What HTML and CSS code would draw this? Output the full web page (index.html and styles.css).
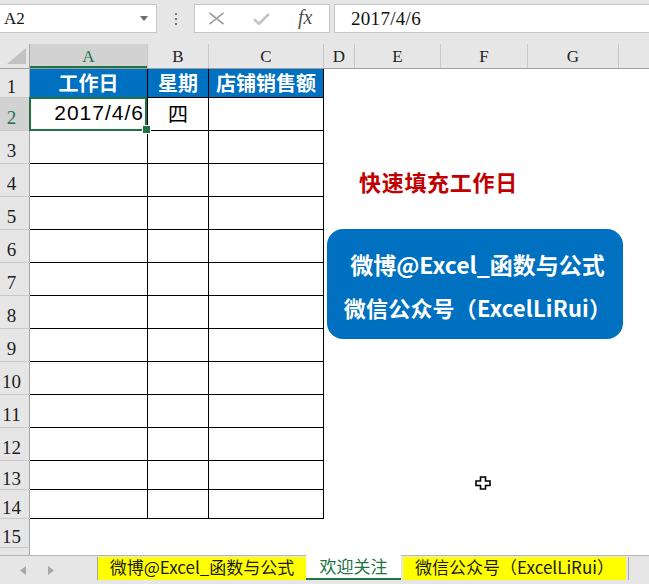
FILE: index.html
```html
<!DOCTYPE html>
<html>
<head>
<meta charset="utf-8">
<title>Excel</title>
<link rel="stylesheet" href="styles.css">
</head>
<body>
<div class="app">
  <div class="fbar">
    <div class="namebox">
      <span>A2</span>
      <svg class="nb-arrow" width="8" height="5" viewBox="0 0 8 5"><path d="M0 0H8L4 5Z" fill="#6a6a6a"/></svg>
    </div>
    <div class="dots"><i></i><i></i><i></i></div>
    <div class="iconbox">
      <svg class="ic" width="17" height="13" viewBox="0 0 17 13"><path d="M1.5 0.8L15.5 12.2M15.5 0.8L1.5 12.2" stroke="#9c9c9c" stroke-width="1.6" fill="none"/></svg>
      <svg class="ic" width="17" height="12" viewBox="0 0 17 12"><path d="M1 6.2L6 10.8L16 1" stroke="#c4c4c4" stroke-width="2.6" fill="none"/></svg>
      <span class="fx">fx</span>
    </div>
    <div class="formula">2017/4/6</div>
  </div>

  <div class="sheet">
    <div class="colhead">
      <div class="corner"><svg width="29" height="24" viewBox="0 0 29 24"><path d="M7 20H26V4Z" fill="#c2c2c2"/></svg></div>
      <div class="hA sel-h">A</div>
      <div class="hB">B</div>
      <div class="hC">C</div>
      <div class="hD">D</div>
      <div class="hE">E</div>
      <div class="hF">F</div>
      <div class="hG">G</div>
      <div class="hH"></div>
    </div>

    <div class="row r1 short">
      <div class="rh">1</div>
      <div class="c ca hd">工作日</div>
      <div class="c cb hd">星期</div>
      <div class="c cc hd">店铺销售额</div>
    </div>
    <div class="row">
      <div class="rh sel-r">2</div>
      <div class="c ca date sel">2017/4/6</div>
      <div class="c cb wk">四</div>
      <div class="c cc"></div>
    </div>
    <div class="row"><div class="rh">3</div><div class="c ca"></div><div class="c cb"></div><div class="c cc"></div></div>
    <div class="row"><div class="rh">4</div><div class="c ca"></div><div class="c cb"></div><div class="c cc"></div></div>
    <div class="row"><div class="rh">5</div><div class="c ca"></div><div class="c cb"></div><div class="c cc"></div></div>
    <div class="row"><div class="rh">6</div><div class="c ca"></div><div class="c cb"></div><div class="c cc"></div></div>
    <div class="row"><div class="rh">7</div><div class="c ca"></div><div class="c cb"></div><div class="c cc"></div></div>
    <div class="row"><div class="rh">8</div><div class="c ca"></div><div class="c cb"></div><div class="c cc"></div></div>
    <div class="row"><div class="rh">9</div><div class="c ca"></div><div class="c cb"></div><div class="c cc"></div></div>
    <div class="row"><div class="rh">10</div><div class="c ca"></div><div class="c cb"></div><div class="c cc"></div></div>
    <div class="row"><div class="rh">11</div><div class="c ca"></div><div class="c cb"></div><div class="c cc"></div></div>
    <div class="row"><div class="rh">12</div><div class="c ca"></div><div class="c cb"></div><div class="c cc"></div></div>
    <div class="row short"><div class="rh">13</div><div class="c ca"></div><div class="c cb"></div><div class="c cc"></div></div>
    <div class="row short"><div class="rh">14</div><div class="c ca"></div><div class="c cb"></div><div class="c cc"></div></div>
    <div class="row short"><div class="rh">15</div></div>
    <div class="row tail"><div class="rh"></div></div>

    <div class="title">快速填充工作日</div>
    <div class="card">
      <div class="l1">微博@Excel_函数与公式</div>
      <div class="l2">微信公众号（ExcelLiRui）</div>
    </div>
    <svg class="cursor" width="16" height="14" viewBox="0 0 16 14"><path d="M5.5 1H10.5V5H15V9.5H10.5V13H5.5V9.5H1V5H5.5Z" fill="#fff" stroke="#000" stroke-width="1.6"/></svg>
  </div>

  <div class="tabs">
    <div class="nav">
      <svg width="6" height="9" viewBox="0 0 6 9"><path d="M6 0V9L0 4.5Z" fill="#a8a8a8"/></svg>
      <svg width="6" height="9" viewBox="0 0 6 9"><path d="M0 0V9L6 4.5Z" fill="#a8a8a8"/></svg>
    </div>
    <div class="tab t1">微博@Excel_函数与公式</div>
    <div class="tab t2">欢迎关注</div>
    <div class="tab t3">微信公众号（ExcelLiRui）</div>
    <div class="tsep"></div>
  </div>
</div>
</body>
</html>
```
FILE: styles.css
```css
* { box-sizing: border-box; }
html, body { margin: 0; padding: 0; }
body {
  width: 649px;
  height: 584px;
  overflow: hidden;
  background: #fff;
  font-family: "Liberation Serif", serif;
  color: #222;
}
.app { width: 649px; height: 584px; overflow: hidden; }

/* formula bar */
.fbar {
  height: 44px;
  background: #e6e6e6;
  display: flex;
  align-items: flex-start;
  padding-top: 4px;
}
.namebox {
  width: 157px;
  height: 29px;
  background: #fff;
  border: 1px solid #c6c6c6;
  border-left: none;
  display: flex;
  align-items: center;
  justify-content: space-between;
  padding: 0 8px 0 4px;
  font-family: "Liberation Serif", serif;
  font-size: 17px;
  color: #111;
}
.dots {
  width: 37px;
  display: flex;
  flex-direction: column;
  align-items: center;
  gap: 3px;
  padding-top: 9px;
}
.dots i { display: block; width: 2px; height: 2px; background: #777; }
.iconbox {
  width: 136px;
  height: 29px;
  background: #fff;
  border: 1px solid #c6c6c6;
  display: flex;
  align-items: center;
  padding-left: 13px;
  gap: 28px;
  margin-right: 4px;
}
.ic { display: block; }
.fx {
  font-family: "Liberation Serif", serif;
  font-style: italic;
  font-size: 20px;
  color: #505050;
  margin-top: -2px;
}
.formula {
  flex: 1;
  height: 29px;
  background: #fff;
  border: 1px solid #c6c6c6;
  border-right: none;
  padding-left: 16px;
  font-size: 19px;
  letter-spacing: 0.3px;
  line-height: 27px;
  color: #111;
}

/* sheet */
.sheet { position: relative; height: 511px; background: #fff; }
.colhead {
  display: flex;
  height: 25px;
  background: #e6e6e6;
  border-bottom: 1px solid #9f9f9f;
}
.colhead > div {
  flex: none;
  border-right: 1px solid #c8c8c8;
  text-align: center;
  font-size: 17px;
  line-height: 26px;
  color: #222;
}
.colhead .corner { width: 30px; border-right-color: #a6a6a6; }
.corner svg { display: block; }
.hA { width: 118px; }
.hB { width: 61px; }
.hC { width: 115px; }
.hD { width: 31px; }
.hE { width: 86px; }
.hF { width: 87px; }
.hG { width: 91px; }
.colhead .hH { flex: 1; border-right: none; }
.colhead .sel-h {
  background: #d2d2d2;
  color: #217346;
  box-shadow: inset 0 -2px 0 #217346;
}

.row { display: flex; height: 33px; }
.row.short { height: 29px; }
.row.tail { height: 7px; }
.rh {
  width: 30px;
  flex: none;
  background: #e6e6e6;
  border-right: 1px solid #a6a6a6;
  border-bottom: 1px solid #c8c8c8;
  font-size: 19px;
  text-align: center;
  padding: 7px 6px 0 0;
  line-height: 26px;
  color: #1d1d1d;
  overflow: hidden;
}
.short .rh { line-height: 22px; }
.tail .rh { border-bottom: none; }
.rh.sel-r { background: #d2d2d2; color: #217346; }

.c {
  flex: none;
  border-right: 1px solid #000;
  border-bottom: 1px solid #000;
}
.ca { width: 118px; }
.cb { width: 61px; }
.cc { width: 115px; }

.c.hd {
  background: #0070c0;
  color: #fff;
  font-family: "Noto Sans CJK SC", sans-serif;
  font-weight: bold;
  font-size: 20px;
  line-height: 27px;
  text-align: center;
}
.c.date {
  font-family: "Liberation Sans", sans-serif;
  font-size: 21px;
  letter-spacing: 1px;
  text-align: right;
  padding-right: 3px;
  line-height: 30px;
  color: #000;
}
.c.wk {
  font-family: "Noto Sans CJK SC", sans-serif;
  font-size: 20px;
  text-align: center;
  line-height: 32px;
  color: #000;
}
.sel { position: relative; }
.sel::after {
  content: "";
  position: absolute;
  left: -1px;
  top: -1px;
  right: 0;
  bottom: -1px;
  border: 2px solid #217346;
  z-index: 2;
}
.sel::before {
  content: "";
  position: absolute;
  right: -4px;
  bottom: -4px;
  width: 7px;
  height: 7px;
  background: #217346;
  border: 1px solid #fff;
  z-index: 3;
}

/* floating shapes */
.title {
  position: absolute;
  left: 359px;
  top: 124px;
  color: #c00000;
  font-family: "Noto Sans CJK SC", sans-serif;
  font-weight: bold;
  font-size: 22px;
  letter-spacing: 0.7px;
  line-height: 26px;
  white-space: nowrap;
}
.card {
  position: absolute;
  left: 327px;
  top: 185px;
  width: 296px;
  height: 110px;
  background: #0070c0;
  border-radius: 16px;
  color: #fff;
  font-family: "Noto Sans CJK SC", sans-serif;
  font-weight: bold;
  line-height: 43px;
  display: flex;
  flex-direction: column;
  align-items: center;
  justify-content: center;
  padding: 3px 0 0 5px;
  white-space: nowrap;
}
.card .l1 { font-size: 23px; }
.card .l2 { font-size: 22px; letter-spacing: 0.2px; }
.cursor { position: absolute; left: 475px; top: 432px; }

/* sheet tabs */
.tabs {
  height: 29px;
  background: #e6e6e6;
  border-top: 1px solid #b5b5b5;
  display: flex;
  align-items: flex-start;
  font-family: "Noto Sans CJK SC", sans-serif;
}
.nav {
  width: 97px;
  height: 28px;
  display: flex;
  align-items: center;
  padding-left: 20px;
  gap: 22px;
}
.nav svg { display: block; }
.tab {
  height: 23px;
  margin-top: 1px;
  font-size: 17px;
  line-height: 19px;
  text-align: center;
  white-space: nowrap;
  color: #1a1a1a;
}
.t1 { width: 209px; background: #ffff00; border-left: 1px solid #a6a6a6; }
.t2 {
  width: 95px;
  height: 25px;
  margin-top: -1px;
  background: #fff;
  color: #217346;
  border-bottom: 2px solid #217346;
  line-height: 21px;
}
.t3 { width: 223px; margin-left: 2px; background: #ffff00; }
.tsep { width: 1px; height: 23px; margin-top: 1px; margin-left: 2px; background: #a6a6a6; }
```
